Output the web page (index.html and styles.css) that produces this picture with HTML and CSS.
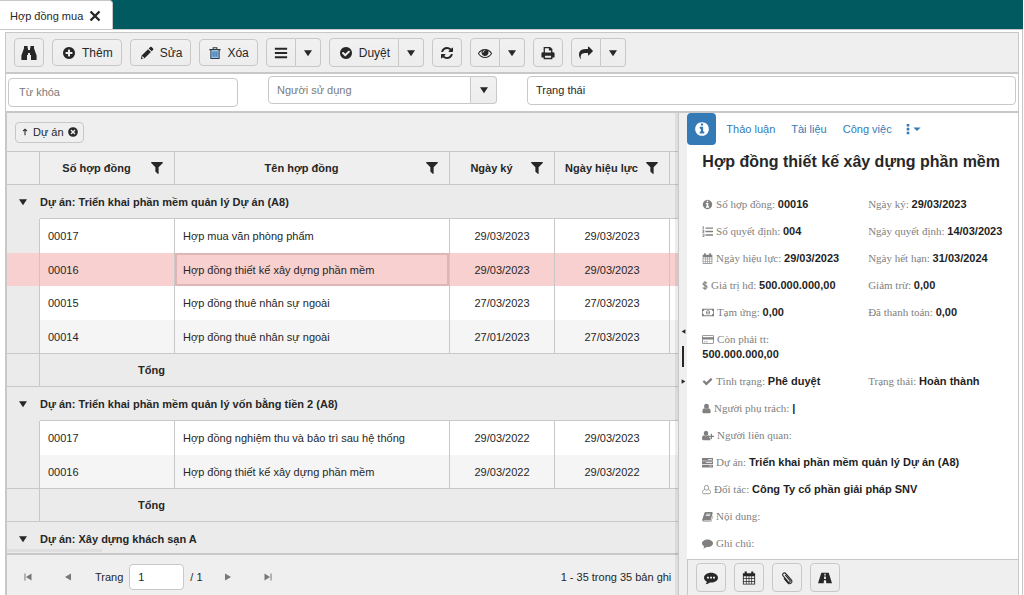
FILE: index.html
```html
<!DOCTYPE html>
<html lang="vi">
<head>
<meta charset="utf-8">
<meta name="viewport" content="width=device-width, initial-scale=1">
<title>Hợp đồng mua</title>
<link rel="stylesheet" href="styles.css">
</head>
<body>
<svg class="sprite" aria-hidden="true">
  <symbol id="i-binoculars" viewBox="0 0 16 16"><path d="M3 1h3.600v2.200H7V5h2V3.200h.4V1H13v2.200l2.600 7.300V15H10v-5H9V8H7v2H6v5H.4v-4.500L3 3.200z"/></symbol>
  <symbol id="i-plus" viewBox="0 0 1792 1792"><path d="M1344 960v-128q0-26-19-45t-45-19h-256v-256q0-26-19-45t-45-19h-128q-26 0-45 19t-19 45v256h-256q-26 0-45 19t-19 45v128q0 26 19 45t45 19h256v256q0 26 19 45t45 19h128q26 0 45-19t19-45v-256h256q26 0 45-19t19-45zm320-64q0 209-103 385.500t-279.500 279.500-385.500 103-385.500-103-279.500-279.500-103-385.500 103-385.500 279.500-279.500 385.500-103 385.500 103 279.500 279.500 103 385.500z"/></symbol>
  <symbol id="i-check-circle" viewBox="0 0 1792 1792"><path d="M1412 734q0-28-18-46l-91-90q-19-19-45-19t-45 19l-408 407-226-226q-19-19-45-19t-45 19l-91 90q-18 18-18 46 0 27 18 45l362 362q19 19 45 19 27 0 46-19l543-543q18-18 18-45zm252 162q0 209-103 385.500t-279.500 279.500-385.500 103-385.500-103-279.500-279.500-103-385.500 103-385.500 279.500-279.500 385.500-103 385.500 103 279.500 279.500 103 385.500z"/></symbol>
  <symbol id="i-pencil" viewBox="0 0 16 16"><path d="M11.600 1.200a1.200 1.200 0 0 1 1.700 0l1.600 1.600a1.200 1.200 0 0 1 0 1.700l-1.600 1.600-3.300-3.300zM9.200 3.600l3.300 3.300-7.200 7.200L1 15l.9-4.200zM2.900 11.400l-.5 2.300 1 .6 1.700-.4z" fill-rule="evenodd"/></symbol>
  <symbol id="i-trash" viewBox="0 0 16 16"><rect x="3" y="5" width="10" height="9.500" fill="#8fbbe6"/><path d="M.5 3.500h15M5.500 3V1h5v2M2.500 4v11.200h11V4" fill="none" stroke="#2b3a48" stroke-width="1.400"/><path d="M5.500 6v7M8 6v7M10.500 6v7" fill="none" stroke="#2f6fb0" stroke-width="1.300"/></symbol>
  <symbol id="i-bars" viewBox="0 0 16 16"><path d="M1 2h14v2.200H1zM1 6.900h14v2.200H1zM1 11.800h14V14H1z"/></symbol>
  <symbol id="i-down" viewBox="0 0 10 10"><path d="M0 1.500h10L5 9z"/></symbol>
  <symbol id="i-caret" viewBox="0 0 10 10"><path d="M.5 3h9L5 7.500z"/></symbol>
  <symbol id="i-refresh" viewBox="0 0 1792 1792"><path d="M1639 1056q0 5-1 7-64 268-268 434.500t-478 166.500q-146 0-282.500-55t-243.500-157l-129 129q-19 19-45 19t-45-19-19-45v-448q0-26 19-45t45-19h448q26 0 45 19t19 45-19 45l-137 137q71 66 161 102t187 36q134 0 250-65t186-179q11-17 53-117 8-23 30-23h192q13 0 22.500 9.500t9.500 22.500zm25-800v448q0 26-19 45t-45 19h-448q-26 0-45-19t-19-45 19-45l138-138q-148-137-349-137-134 0-250 65t-186 179q-11 17-53 117-8 23-30 23h-199q-13 0-22.500-9.500t-9.500-22.500v-7q65-268 270-434.500t480-166.500q146 0 284 55.500t245 156.500l130-129q19-19 45-19t45 19 19 45z"/></symbol>
  <symbol id="i-eye" viewBox="0 0 1792 1792"><path d="M1664 960q-152-236-381-353 61 104 61 225 0 185-131.500 316.500t-316.500 131.500-316.500-131.500-131.500-316.500q0-121 61-225-229 117-381 353 133 205 333.500 326.500t434.500 121.500 434.500-121.500 333.500-326.500zm-720-384q0-20-14-34t-34-14q-125 0-214.500 89.500t-89.500 214.500q0 20 14 34t34 14 34-14 14-34q0-86 61-147t147-61q20 0 34-14t14-34zm848 384q0 34-20 69-140 230-376.500 368.500t-499.500 138.500-499.500-139-376.500-368q-20-35-20-69t20-69q140-229 376.500-368t499.500-139 499.500 139 376.500 368q20 35 20 69z"/></symbol>
  <symbol id="i-print" viewBox="0 0 16 16"><path fill-rule="evenodd" d="M3 1h7.500L13 3.500V7h.8A1.700 1.700 0 0 1 15.500 8.700V13H13v2H3v-2H.5V8.700A1.700 1.700 0 0 1 2.200 7H3zm1.500 1.500v5h7V5H9V2.500zm0 8.700v2.300h7v-2.300z"/></symbol>
  <symbol id="i-share" viewBox="0 0 1792 1792"><path d="M1792 640q0 26-19 45l-512 512q-19 19-45 19t-45-19-19-45v-256h-224q-98 0-175.500 6t-154 21.500-133 42.500-105.500 69.500-80 101-48.500 138.500-17.500 181q0 55 5 123 0 6 2.500 23.500t2.500 26.500q0 15-8.500 25t-23.500 10q-16 0-28-17-7-9-13-22t-13.500-30-10.500-24q-127-285-127-451 0-199 53-333 162-403 875-403h224v-256q0-26 19-45t45-19 45 19l512 512q19 19 19 45z"/></symbol>
  <symbol id="i-filter" viewBox="190 250 1412 1420"><path d="M1595 295q17 41-14 70l-493 493v742q0 42-39 59-13 5-25 5-27 0-45-19l-256-256q-19-19-19-45v-486l-493-493q-31-29-14-70 17-39 59-39h1280q42 0 59 39z"/></symbol>
  <symbol id="i-info" viewBox="0 0 1792 1792"><path d="M1152 1376v-160q0-14-9-23t-23-9h-96v-512q0-14-9-23t-23-9h-320q-14 0-23 9t-9 23v160q0 14 9 23t23 9h96v320h-96q-14 0-23 9t-9 23v160q0 14 9 23t23 9h448q14 0 23-9t9-23zm-128-896v-160q0-14-9-23t-23-9h-192q-14 0-23 9t-9 23v160q0 14 9 23t23 9h192q14 0 23-9t9-23zm640 416q0 209-103 385.500t-279.500 279.500-385.500 103-385.500-103-279.500-279.500-103-385.500 103-385.500 279.500-279.500 385.500-103 385.500 103 279.500 279.500 103 385.500z"/></symbol>
  <symbol id="i-close" viewBox="0 0 12 12"><path d="M1.500 1.500l9 9M10.500 1.500l-9 9" fill="none" stroke="currentColor" stroke-width="2.400"/></symbol>
  <symbol id="i-remove" viewBox="0 0 12 12"><path fill-rule="evenodd" d="M6 .2a5.800 5.800 0 1 1 0 11.600A5.800 5.800 0 0 1 6 .2zM4.200 3 3 4.200 4.800 6 3 7.800 4.200 9 6 7.200 7.800 9 9 7.800 7.200 6 9 4.200 7.800 3 6 4.800z"/></symbol>
  <symbol id="i-up" viewBox="0 0 8 10"><path d="M4 9V2M1.500 4 4 1.500 6.500 4" fill="none" stroke="currentColor" stroke-width="1.300"/></symbol>
  <symbol id="i-list" viewBox="0 0 16 16"><path d="M5 2h11v2H5zM5 7h11v2H5zM5 12h11v2H5zM1 .5h1.500V5H1zM.5 6h3v1.500l-1.500 2h1.500v1h-3V9.500l1.500-2H.5zM.5 11.500h3v4h-3v-1h2V14h-1v-1h1v-.5h-2z"/></symbol>
  <symbol id="i-calendar" viewBox="0 0 16 16"><path fill-rule="evenodd" d="M1 2.500h2V.5h2.500v2h5v-2H13v2h2v13H1zm1 3.500v2.400h2.500V6zm3.300 0v2.400h2.300V6zm3.100 0v2.400h2.300V6zm3.100 0v2.400H14V6zM2 9.200v2.300h2.500V9.200zm3.300 0v2.300h2.300V9.200zm3.100 0v2.300h2.300V9.200zm3.100 0v2.300H14V9.200zM2 12.300v2.200h2.500v-2.200zm3.300 0v2.200h2.300v-2.200zm3.100 0v2.200h2.300v-2.200zm3.100 0v2.200H14v-2.200z"/></symbol>
  <symbol id="i-dollar" viewBox="0 0 10 16"><path d="M8.500 4.500C7.500 3.300 6.300 3 5 3 3 3 1.800 4 1.800 5.400 1.800 8.700 8.400 7 8.400 10.500 8.400 12 7 13 5 13c-1.500 0-2.900-.5-3.800-1.700M5 .5v15" fill="none" stroke="currentColor" stroke-width="1.900"/></symbol>
  <symbol id="i-money" viewBox="0 0 18 16"><path fill-rule="evenodd" d="M0 2.500h18v11H0zM1.200 6v4a2.500 2.500 0 0 1 2.300 2.300h11A2.500 2.500 0 0 1 16.800 10V6a2.500 2.500 0 0 1-2.300-2.300h-11A2.500 2.500 0 0 1 1.200 6zM9 4.500a3 3.500 0 1 1 0 7 3 3.500 0 0 1 0-7zm-.3 1.300-1.200.8v.7h.9v2.400h-.9v.8h3v-.8h-.8V5.800z"/></symbol>
  <symbol id="i-card" viewBox="0 0 18 16"><path fill-rule="evenodd" d="M1.500 1.500h15A1.500 1.500 0 0 1 18 3v10a1.500 1.500 0 0 1-1.500 1.500h-15A1.500 1.500 0 0 1 0 13V3a1.500 1.500 0 0 1 1.500-1.500zm-.3 1.300v1.700h15.600V2.800zm0 5.200v5.200h15.600V8zM2.500 11h2v1h-2zM5.500 11h3v1h-3z"/></symbol>
  <symbol id="i-check" viewBox="0 0 1792 1792"><path d="M1671 566q0 40-28 68l-724 724-136 136q-28 28-68 28t-68-28l-136-136-362-362q-28-28-28-68t28-68l136-136q28-28 68-28t68 28l294 295 656-657q28-28 68-28t68 28l136 136q28 28 28 68z"/></symbol>
  <symbol id="i-user" viewBox="0 0 12 16"><path d="M6 1a3.500 3.800 0 1 1 0 7.600A3.500 3.800 0 0 1 6 1zM2.800 7.600a4.600 4.600 0 0 0 6.400 0C11.500 8 12 10.500 12 12.600 12 14 11 15 9.800 15H2.200C1 15 0 14 0 12.600 0 10.500.5 8 2.800 7.600z"/></symbol>
  <symbol id="i-user-plus" viewBox="0 0 18 16"><path d="M6 1a3.500 3.800 0 1 1 0 7.600A3.500 3.800 0 0 1 6 1zM2.800 7.600a4.600 4.600 0 0 0 6.400 0l1.300.6v3.300h2V15H2.200C1 15 0 14 0 12.600 0 10.500.5 8 2.800 7.600zM13.200 5.500h1.800v3h3v1.800h-3v3h-1.800v-3h-2.700V8.500h2.700z"/></symbol>
  <symbol id="i-server" viewBox="0 0 16 16"><path fill-rule="evenodd" d="M0 1.500h16v4H0zM0 6.300h16v4H0zM0 11.100h16v4H0zM9 3v1h5.500V3zM6 7.800v1h8.500v-1zM10 12.600v1h4.500v-1z"/></symbol>
  <symbol id="i-user-o" viewBox="0 0 14 16"><path d="M7 1.500a3.300 3.800 0 1 1 0 7.600 3.300 3.800 0 0 1 0-7.600zM4 7.800C1.600 8.500.8 10.600.8 12.800c0 1 .8 1.700 1.700 1.700h9c.9 0 1.700-.7 1.700-1.700 0-2.200-.8-4.300-3.200-5" fill="none" stroke="currentColor" stroke-width="1.200"/></symbol>
  <symbol id="i-book" viewBox="0 0 16 16"><path fill-rule="evenodd" d="M5.500 1.500h8.800c.9 0 1.500.8 1.200 1.700l-2.600 9c-.2.7-.8 1.200-1.600 1.200H2.600c-.4 0-.6.400-.3.700h9.900c.7 0 1.200-.4 1.400-1l2-6.600c.4.400.5.900.3 1.500l-1.900 6c-.2.800-.9 1.300-1.700 1.300H2.500C1 15.300 0 13.800.4 12.500L3.500 3c.3-.9 1-1.500 2-1.500zm.8 2.500-.3 1h6.200l.3-1zM5.600 6.200l-.3 1h6.200l.3-1z"/></symbol>
  <symbol id="i-comment" viewBox="0 0 16 16"><path d="M8 2c4.400 0 8 2.500 8 5.600s-3.600 5.600-8 5.600l-1.300-.1C5.200 14.400 3.500 15 1.700 15.100c.7-.8 1.300-1.700 1.600-2.900C1.300 11.200 0 9.500 0 7.600 0 4.500 3.600 2 8 2z"/></symbol>
  <symbol id="i-commenting" viewBox="0 0 16 16"><path fill-rule="evenodd" d="M8 2c4.400 0 8 2.500 8 5.600s-3.600 5.600-8 5.600l-1.300-.1C5.200 14.400 3.500 15 1.700 15.100c.7-.8 1.300-1.700 1.600-2.900C1.300 11.200 0 9.500 0 7.600 0 4.500 3.600 2 8 2zM3.400 6.500v2.200h2.200V6.500zm3.500 0v2.200h2.200V6.500zm3.500 0v2.200h2.200V6.500z"/></symbol>
  <symbol id="i-clip" viewBox="0 0 16 16"><path d="M6 4.500l5.300 6.200c1.200 1.500-.7 3-1.900 1.700L3.600 5.600C1.800 3.400 4.800.8 6.700 3l6.200 7.200c2.200 2.800-1.500 6-4 3.300L4.500 8.400" fill="none" stroke="currentColor" stroke-width="1.200"/></symbol>
  <symbol id="i-road" viewBox="0 0 16 16"><path fill-rule="evenodd" d="M3.800 2h8.400L16 14H9.500l-.3-3.500H6.800L6.500 14H0zM7.300 3l-.2 2h1.800l-.2-2zM7 6.300 6.900 9h2.200L9 6.300z"/></symbol>
  <symbol id="i-dots" viewBox="0 0 4 12"><path d="M.6 0h2.800v2.800H.6zM.6 4.200h2.800V7H.6zM.6 8.400h2.800v2.800H.6z"/></symbol>
  <symbol id="i-prev" viewBox="0 0 8 8"><path d="M7 .5v7L1 4z"/></symbol>
  <symbol id="i-next" viewBox="0 0 8 8"><path d="M1 .5v7L7 4z"/></symbol>
  <symbol id="i-first" viewBox="0 0 8 8"><path d="M.5.500h1v7h-1zM7.500.500v7L2 4z"/></symbol>
  <symbol id="i-last" viewBox="0 0 8 8"><path d="M6.500.500h1v7h-1zM.5.500v7L6 4z"/></symbol>
</svg>

<header class="tabs">
  <div class="tab">
    <span>Hợp đồng mua</span>
    <button class="plain" aria-label="Đóng"><svg class="ic12"><use href="#i-close"/></svg></button>
  </div>
</header>

<main class="app">
  <div class="toolbar">
    <button class="btn icon-btn" aria-label="Tìm kiếm"><svg class="ic16"><use href="#i-binoculars"/></svg></button>
    <button class="btn text-btn"><svg class="ic14"><use href="#i-plus"/></svg>Thêm</button>
    <button class="btn text-btn"><svg class="ic14"><use href="#i-pencil"/></svg>Sửa</button>
    <button class="btn text-btn"><svg class="ic12"><use href="#i-trash"/></svg>Xóa</button>
    <div class="split"><button class="btn icon-btn" aria-label="Danh sách"><svg class="ic14"><use href="#i-bars"/></svg></button><button class="btn drop-btn" aria-label="Mở danh sách"><svg class="ic8"><use href="#i-down"/></svg></button></div>
    <div class="split"><button class="btn text-btn"><svg class="ic14"><use href="#i-check-circle"/></svg>Duyệt</button><button class="btn drop-btn" aria-label="Mở duyệt"><svg class="ic8"><use href="#i-down"/></svg></button></div>
    <button class="btn icon-btn" aria-label="Làm mới"><svg class="ic14"><use href="#i-refresh"/></svg></button>
    <div class="split"><button class="btn icon-btn" aria-label="Xem"><svg class="ic14"><use href="#i-eye"/></svg></button><button class="btn drop-btn" aria-label="Mở xem"><svg class="ic8"><use href="#i-down"/></svg></button></div>
    <button class="btn icon-btn" aria-label="In"><svg class="ic14"><use href="#i-print"/></svg></button>
    <div class="split"><button class="btn icon-btn" aria-label="Chia sẻ"><svg class="ic14"><use href="#i-share"/></svg></button><button class="btn drop-btn" aria-label="Mở chia sẻ"><svg class="ic8"><use href="#i-down"/></svg></button></div>
  </div>

  <form class="filters">
    <input class="field keyword" type="text" placeholder="Từ khóa" aria-label="Từ khóa">
    <div class="combo">
      <input class="field" type="text" placeholder="Người sử dụng" aria-label="Người sử dụng">
      <button class="btn drop-btn" type="button" aria-label="Chọn người sử dụng"><svg class="ic8"><use href="#i-down"/></svg></button>
    </div>
    <input class="field" type="text" value="Trạng thái" aria-label="Trạng thái">
  </form>

  <div class="workspace">
    <section class="grid">
      <div class="grouping">
        <span class="chip"><svg class="ic8"><use href="#i-up"/></svg>Dự án<button class="plain" aria-label="Bỏ nhóm"><svg class="ic10"><use href="#i-remove"/></svg></button></span>
      </div>
      <div class="grid-body">
        <table>
          <colgroup><col class="c-toggle"><col class="c-no"><col class="c-name"><col class="c-sign"><col class="c-valid"><col></colgroup>
          <thead>
            <tr>
              <th></th>
              <th><div class="head"><span>Số hợp đồng</span><svg class="ic12"><use href="#i-filter"/></svg></div></th>
              <th><div class="head"><span>Tên hợp đồng</span><svg class="ic12"><use href="#i-filter"/></svg></div></th>
              <th><div class="head"><span>Ngày ký</span><svg class="ic12"><use href="#i-filter"/></svg></div></th>
              <th><div class="head"><span>Ngày hiệu lực</span><svg class="ic12"><use href="#i-filter"/></svg></div></th>
              <th></th>
            </tr>
          </thead>
          <tbody>
            <tr class="group"><td class="toggle"><button class="plain" aria-label="Thu gọn"><svg class="ic8"><use href="#i-down"/></svg></button></td><td colspan="5">Dự án: Triển khai phần mềm quản lý Dự án (A8)</td></tr>
            <tr><td class="side"></td><td>00017</td><td>Hợp mua văn phòng phẩm</td><td class="date">29/03/2023</td><td class="date">29/03/2023</td><td></td></tr>
            <tr class="selected"><td class="side"></td><td>00016</td><td class="focused">Hợp đồng thiết kế xây dựng phần mềm</td><td class="date">29/03/2023</td><td class="date">29/03/2023</td><td></td></tr>
            <tr><td class="side"></td><td>00015</td><td>Hợp đồng thuê nhân sự ngoài</td><td class="date">27/03/2023</td><td class="date">27/03/2023</td><td></td></tr>
            <tr class="alt"><td class="side"></td><td>00014</td><td>Hợp đồng thuê nhân sự ngoài</td><td class="date">27/01/2023</td><td class="date">27/03/2023</td><td></td></tr>
            <tr class="total"><td class="side"></td><td class="sum" colspan="5">Tổng</td></tr>
            <tr class="group"><td class="toggle"><button class="plain" aria-label="Thu gọn"><svg class="ic8"><use href="#i-down"/></svg></button></td><td colspan="5">Dự án: Triển khai phần mềm quản lý vốn bằng tiền 2 (A8)</td></tr>
            <tr><td class="side"></td><td>00017</td><td>Hợp đồng nghiệm thu và bảo trì sau hệ thống</td><td class="date">29/03/2022</td><td class="date">29/03/2023</td><td></td></tr>
            <tr class="alt"><td class="side"></td><td>00016</td><td>Hợp đồng thiết kế xây dựng phần mềm</td><td class="date">29/03/2022</td><td class="date">29/03/2022</td><td></td></tr>
            <tr class="total"><td class="side"></td><td class="sum" colspan="5">Tổng</td></tr>
            <tr class="group"><td class="toggle"><button class="plain" aria-label="Thu gọn"><svg class="ic8"><use href="#i-down"/></svg></button></td><td colspan="5">Dự án: Xây dựng khách sạn A</td></tr>
          </tbody>
        </table>
        <div class="hscroll"></div>
      </div>
      <nav class="pager">
        <button class="plain nav" aria-label="Trang đầu"><svg class="ic8"><use href="#i-first"/></svg></button>
        <button class="plain nav" aria-label="Trang trước"><svg class="ic8"><use href="#i-prev"/></svg></button>
        <label for="page">Trang</label>
        <input id="page" class="field page" type="text" value="1">
        <span>/ 1</span>
        <button class="plain nav next" aria-label="Trang sau"><svg class="ic8"><use href="#i-next"/></svg></button>
        <button class="plain nav" aria-label="Trang cuối"><svg class="ic8"><use href="#i-last"/></svg></button>
        <span class="count">1 - 35 trong 35 bản ghi</span>
      </nav>
      <div class="vscroll"></div>
    </section>

    <div class="splitter">
      <svg class="grip"><use href="#i-prev"/></svg>
      <span class="bar"></span>
      <svg class="grip"><use href="#i-next"/></svg>
    </div>

    <aside class="panel">
      <nav class="panel-tabs">
        <a class="active" href="#info" aria-label="Thông tin"><svg class="ic16"><use href="#i-info"/></svg></a>
        <a href="#discuss">Thảo luận</a>
        <a href="#docs">Tài liệu</a>
        <a href="#tasks">Công việc</a>
        <a class="more" href="#more" aria-label="Khác"><svg class="dots"><use href="#i-dots"/></svg><svg class="ic8"><use href="#i-caret"/></svg></a>
      </nav>
      <div class="detail">
        <h1>Hợp đồng thiết kế xây dựng phần mềm</h1>
        <div class="facts">
          <p><svg class="fi"><use href="#i-info"/></svg> Số hợp đồng: <b>00016</b></p><p>Ngày ký: <b>29/03/2023</b></p>
          <p><svg class="fi"><use href="#i-list"/></svg> Số quyết định: <b>004</b></p><p>Ngày quyết định: <b>14/03/2023</b></p>
          <p><svg class="fi"><use href="#i-calendar"/></svg> Ngày hiệu lực: <b>29/03/2023</b></p><p>Ngày hết hạn: <b>31/03/2024</b></p>
          <p><svg class="fi narrow"><use href="#i-dollar"/></svg> Giá trị hđ: <b>500.000.000,00</b></p><p>Giảm trừ: <b>0,00</b></p>
          <p><svg class="fi wide"><use href="#i-money"/></svg> Tạm ứng: <b>0,00</b></p><p>Đã thanh toán: <b>0,00</b></p>
          <p class="stacked"><svg class="fi wide"><use href="#i-card"/></svg> Còn phải tt: <b>500.000.000,00</b></p>
          <p><svg class="fi"><use href="#i-check"/></svg> Tình trạng: <b>Phê duyệt</b></p><p>Trạng thái: <b>Hoàn thành</b></p>
          <p class="full"><svg class="fi slim"><use href="#i-user"/></svg> Người phụ trách: <b>|</b></p>
          <p class="full"><svg class="fi wide"><use href="#i-user-plus"/></svg> Người liên quan:</p>
          <p class="full"><svg class="fi"><use href="#i-server"/></svg> Dự án: <b>Triển khai phần mềm quản lý Dự án (A8)</b></p>
          <p class="full"><svg class="fi slim"><use href="#i-user-o"/></svg> Đối tác: <b>Công Ty cổ phần giải pháp SNV</b></p>
          <p class="full"><svg class="fi"><use href="#i-book"/></svg> Nội dung:</p>
          <p class="full"><svg class="fi"><use href="#i-comment"/></svg> Ghi chú:</p>
        </div>
      </div>
      <footer class="panel-actions">
        <button class="btn icon-btn" aria-label="Bình luận"><svg class="ic14"><use href="#i-commenting"/></svg></button>
        <button class="btn icon-btn" aria-label="Lịch"><svg class="ic14"><use href="#i-calendar"/></svg></button>
        <button class="btn icon-btn" aria-label="Đính kèm"><svg class="ic14"><use href="#i-clip"/></svg></button>
        <button class="btn icon-btn" aria-label="Lộ trình"><svg class="ic14"><use href="#i-road"/></svg></button>
      </footer>
    </aside>
  </div>
</main>
</body>
</html>
```
FILE: styles.css
```css
* { box-sizing: border-box; }

body {
  margin: 0;
  height: 100vh;
  display: flex;
  flex-direction: column;
  overflow: hidden;
  background: #fff;
  color: #272727;
  font: 11px/16px "Liberation Sans", Arial, sans-serif;
}

button, input { font: inherit; color: inherit; }
button { cursor: pointer; }
svg { fill: currentColor; flex: none; display: block; }

.sprite { position: absolute; width: 0; height: 0; }
.ic8 { width: 8px; height: 8px; }
.ic10 { width: 10px; height: 10px; }
.ic12 { width: 12px; height: 12px; }
.ic14 { width: 14px; height: 14px; }
.ic16 { width: 16px; height: 16px; }

.plain {
  display: inline-flex;
  align-items: center;
  padding: 0;
  border: 0;
  background: none;
}

/* Tab strip */
.tabs {
  flex: none;
  display: flex;
  height: 29px;
  margin-right: 1px;
  background: #005a60;
}

.tab {
  display: flex;
  align-items: center;
  gap: 6px;
  height: 30px;
  padding: 0 11px 0 10px;
  border: 1px solid #c8c8c8;
  border-width: 1px 1px 0 0;
  border-radius: 0 4px 0 0;
  background: #fff;
}

.app {
  flex: 1;
  min-height: 0;
  display: flex;
  flex-direction: column;
  margin-right: 1px;
  padding: 2px 3px 0 5px;
  border: 1px solid #c8c8c8;
  border-width: 1px 1px 0 0;
}

/* Toolbar */
.toolbar {
  flex: none;
  display: flex;
  align-items: center;
  gap: 8px;
  height: 42px;
  padding: 0 8px;
  border: 1px solid #c8c8c8;
  border-bottom-width: 2px;
  background: #efefef;
}

.btn {
  display: inline-flex;
  align-items: center;
  justify-content: center;
  height: 29px;
  border: 1px solid #c8c8c8;
  border-radius: 4px;
  background: linear-gradient(#f1f1f1, #ededed);
  padding: 0;
}

.icon-btn { width: 30px; }
.text-btn {
  gap: 6px;
  height: 27px;
  padding: 0 8px 0 9px;
  font-size: 12px;
}
.drop-btn { width: 26px; }

.split { display: flex; }
.split .btn { height: 29px; }
.split .btn:first-child { border-radius: 4px 0 0 4px; }
.split .btn:last-child { border-left: 0; border-radius: 0 4px 4px 0; width: 25px; }

/* Filters */
.filters {
  flex: none;
  display: grid;
  grid-template-columns: 230fr 229fr 489fr;
  gap: 30px;
  align-items: start;
  height: 37px;
  padding: 2px 2px 0;
  border: 1px solid #c8c8c8;
  border-width: 0 1px;
}

.field {
  width: 100%;
  min-width: 0;
  height: 29px;
  padding: 0 8px 2px;
  border: 1px solid #c8c8c8;
  border-radius: 4px;
  background: #fff;
}
.field::placeholder { color: #7a7a7a; opacity: 1; }
.keyword { margin-top: 2px; padding: 0 10px 2px; }
.combo { display: flex; }
.combo .field { height: 28px; padding: 0 8px; border-radius: 4px 0 0 4px; }
.combo .btn { height: 28px; flex: none; border-left: 0; border-radius: 0 4px 4px 0; }

/* Workspace */
.workspace {
  flex: 1;
  min-height: 0;
  display: grid;
  grid-template-columns: minmax(0, 67fr) 9px minmax(0, 33fr);
  grid-template-rows: minmax(0, 1fr);
  border: 1px solid #c8c8c8;
  border-width: 2px 1px 0 2px;
}

.grid {
  position: relative;
  display: flex;
  flex-direction: column;
  min-height: 0;
  background: #ebebeb;
}

.grouping {
  flex: none;
  display: flex;
  align-items: center;
  height: 38px;
  padding: 0 8px;
  background: #efefef;
}

.chip {
  display: inline-flex;
  align-items: center;
  gap: 4px;
  height: 21px;
  padding: 0 5px;
  border: 1px solid #c8c8c8;
  border-radius: 4px;
}

.grid-body {
  position: relative;
  flex: 1;
  min-height: 0;
  overflow: hidden;
}

table {
  width: 100%;
  table-layout: fixed;
  border-collapse: separate;
  border-spacing: 0;
}

.c-toggle { width: 33px; }
.c-no { width: 135px; }
.c-name { width: 275px; }
.c-sign { width: 105px; }
.c-valid { width: 115px; }

th {
  height: 34px;
  padding: 0;
  border: 1px solid #c8c8c8;
  border-width: 1px 1px 1px 0;
  background: #efefef;
}
th:last-child { border-right: 0; }

.head { display: flex; align-items: center; padding: 0 11px 0 2px; }
.head span { flex: 1; white-space: nowrap; }

td {
  height: 34px;
  padding: 0 8px;
  border-right: 1px solid #c8c8c8;
  background: #fff;
  white-space: nowrap;
  overflow: hidden;
}
td:last-child { border-right: 0; }
.date { text-align: center; }
.alt td { background: #f5f5f5; }
.side, .alt .side { background: #ebebeb; }

.selected td { height: 33px; background: #f7d0cf; }
.selected .focused { box-shadow: inset 0 0 0 2px #dfb6b6; }

.group td {
  padding: 0;
  border-right: 0;
  border-bottom: 1px solid #c8c8c8;
  background: #ebebeb;
  font-weight: bold;
}
.group .toggle { padding-left: 12px; border-bottom-color: #ebebeb; }

.total td {
  height: 33px;
  border-bottom: 1px solid #c8c8c8;
  background: #ebebeb;
  font-weight: bold;
}
.alt td { border-bottom: 1px solid #c8c8c8; }
.total .sum { padding-left: 98px; }

/* Overlay scroll bars */
.hscroll {
  position: absolute;
  left: 0;
  bottom: 1px;
  width: 95px;
  height: 3px;
  background: #dfdfdf;
}
.vscroll {
  position: absolute;
  top: 0;
  right: 0;
  bottom: 0;
  width: 3px;
  background: rgba(0, 0, 0, .07);
}

.pager {
  flex: none;
  display: flex;
  align-items: center;
  height: 42px;
  padding: 4px 7px 0 6px;
  border-top: 2px solid #c8c8c8;
  background: #efefef;
}
.nav { width: 30px; height: 30px; justify-content: center; margin-right: 10px; color: #777; }
.pager label { margin-left: 2px; }
.page { width: 55px; height: 26px; margin: 0 6px; padding: 0 8px; }
.next { margin-left: 10px; }
.count { margin-left: auto; }

/* Splitter */
.splitter {
  display: flex;
  flex-direction: column;
  align-items: center;
  justify-content: center;
  gap: 12px;
  padding-top: 4px;
  border-left: 1px solid #c8c8c8;
  background: #efefef;
}
.grip { width: 5px; height: 5px; }
.bar { width: 2px; height: 21px; background: #272727; }

/* Detail panel */
.panel {
  display: flex;
  flex-direction: column;
  min-height: 0;
  background: #fff;
}

.panel-tabs { flex: none; display: flex; align-items: center; gap: 16px; }
.panel-tabs a {
  display: inline-flex;
  align-items: center;
  gap: 3px;
  color: #337ab7;
  text-decoration: none;
  white-space: nowrap;
}
.panel-tabs .active {
  justify-content: center;
  width: 29px;
  height: 32px;
  margin-right: -6px;
  border-radius: 4px;
  background: #337ab7;
  color: #fff;
}
.panel-tabs .more { margin-left: -2px; }
.dots { width: 4px; height: 11px; }

.detail { flex: 1; min-height: 0; padding: 6px 8px 0 15px; overflow: hidden; }

h1 { margin: 0 0 18px; font-size: 16px; line-height: 22px; white-space: nowrap; }

.facts { display: grid; grid-template-columns: 1fr 1fr; column-gap: 24px; }
.facts p {
  margin: 0;
  padding: 6px 0;
  color: #808080;
  font-family: "Liberation Serif", "Times New Roman", serif;
  font-size: 11px;
  line-height: 15px;
  white-space: nowrap;
}
.facts b { color: #1f1f1f; font-family: "Liberation Sans", Arial, sans-serif; }
.facts .full { grid-column: 1 / -1; }
.facts .stacked { grid-column: 1 / -1; }
.stacked b { display: block; }

.fi { display: inline-block; width: 11px; height: 11px; vertical-align: -2px; }
.fi.narrow { width: 6px; }
.fi.slim { width: 9px; }
.fi.wide { width: 12px; }

.panel-actions {
  flex: none;
  display: flex;
  gap: 8px;
  height: 36px;
  padding: 3px 8px 0;
  border-top: 1px solid #c8c8c8;
  border-left: 1px solid #c8c8c8;
  background: #efefef;
}
```
